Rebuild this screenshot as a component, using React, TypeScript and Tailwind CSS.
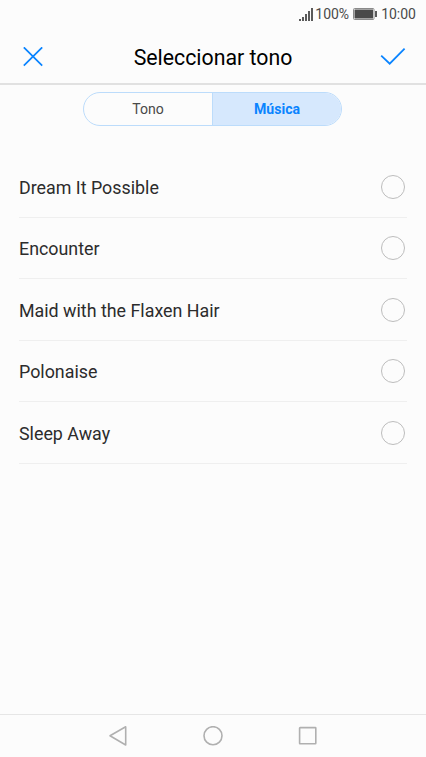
import React from 'react';

function StatusBar() {
  return (
    <div className="flex h-[30px] items-center justify-end pr-[10px] pb-[2px] text-[14px] leading-none text-[#4a4a4a]">
      <svg width="14" height="13" viewBox="0 0 14 13" fill="#5a5a5a" className="mr-[2px]">
        <rect x="0" y="11" width="2" height="2" />
        <rect x="3" y="9" width="2" height="4" />
        <rect x="6" y="6" width="2" height="7" />
        <rect x="9" y="3" width="2" height="10" />
        <rect x="12" y="0" width="2" height="13" />
      </svg>
      <span>100%</span>
      <svg width="24" height="12" viewBox="0 0 24 12" className="ml-1 mr-1">
        <rect x="0.5" y="0.5" width="20.5" height="11" rx="1" fill="none" stroke="#8a8a8a" />
        <rect x="1.5" y="1.5" width="18.5" height="9" fill="#4a4a4a" />
        <rect x="22" y="3" width="2" height="6" fill="#5a5a5a" />
      </svg>
      <span>10:00</span>
    </div>
  );
}

function Header() {
  return (
    <header className="flex h-[55px] items-center justify-between border-b-2 border-[#e1e1e1] pl-[23px] pr-[20px]">
      <button aria-label="Cancelar">
        <svg width="20" height="20" viewBox="0 0 20 20" fill="none" stroke="#0a84ff" strokeWidth="1.7">
          <path d="M0.8 0.3L19.2 18.7M19.2 0.3L0.8 18.7" />
        </svg>
      </button>
      <h1 className="ml-[3px] mt-[2px] text-[21.3px] leading-[26px] text-black">Seleccionar tono</h1>
      <button aria-label="Aceptar">
        <svg width="26" height="20" viewBox="0 0 26 20" fill="none" stroke="#0a84ff" strokeWidth="1.8">
          <path d="M1.2 8.7L9.7 16.7L24.6 1.7" />
        </svg>
      </button>
    </header>
  );
}

function NavBar() {
  return (
    <nav className="flex h-[43px] items-center justify-center gap-[75px] border-t border-[#e6e6e6]">
      <svg width="20" height="22" viewBox="0 0 20 22" fill="none" stroke="#b0b0b0" strokeWidth="1.6" strokeLinejoin="round">
        <path d="M17.7 1.8V20L2 10.8Z" />
      </svg>
      <svg width="20" height="20" viewBox="0 0 20 20" fill="none" stroke="#b0b0b0" strokeWidth="1.6">
        <circle cx="10" cy="9.7" r="9" />
      </svg>
      <svg width="20" height="20" viewBox="0 0 20 20" fill="none" stroke="#b0b0b0" strokeWidth="1.6">
        <rect x="1.6" y="1.6" width="16.2" height="16.2" rx="0.5" />
      </svg>
    </nav>
  );
}

export default function App() {
  const songs = [
    'Dream It Possible',
    'Encounter',
    'Maid with the Flaxen Hair',
    'Polonaise',
    'Sleep Away',
  ];

  return (
    <div className="flex h-[757px] w-[426px] flex-col bg-[#fcfcfc] font-['Roboto',sans-serif]">
      <StatusBar />
      <Header />

      <div className="ml-[83px] mt-[7px] flex h-[34px] w-[259px] overflow-hidden rounded-full border border-[#bcdcfb] text-[14.1px]">
        <button className="flex-1 pt-px text-[#4a4a4a]">Tono</button>
        <button className="flex-1 border-l border-[#bcdcfb] bg-[#d6e8fd] pt-px font-bold text-[#0a84ff]">Música</button>
      </div>

      <ul className="mx-[19px] mt-[30px] flex-1">
        {songs.map((song) => (
          <li key={song} className="flex h-[61.5px] items-center justify-between border-b border-[#efefef] pr-[2px] pt-px">
            <span className="pt-[3px] text-[17.85px] text-[#2c2c2c]">{song}</span>
            <span className="h-6 w-6 rounded-full border border-[#bdbdbd]"></span>
          </li>
        ))}
      </ul>

      <NavBar />
    </div>
  );
}
